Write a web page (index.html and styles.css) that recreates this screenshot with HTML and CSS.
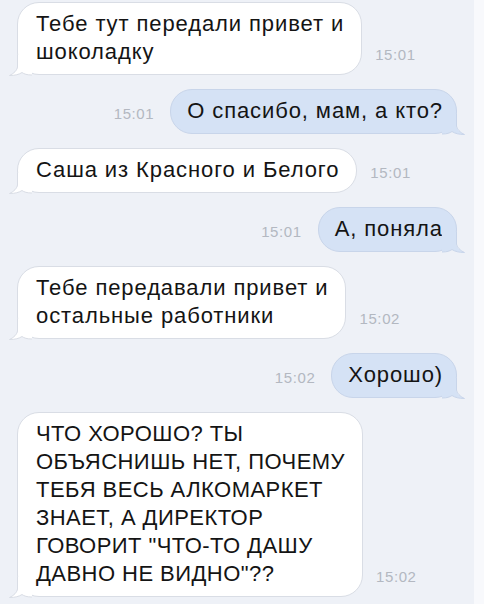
FILE: index.html
```html
<!DOCTYPE html>
<html>

<head>
  <title>Чат</title>
  <link rel="stylesheet" href="styles.css">
</head>

<body>
  <div class="screen">
    <div class="chat">
      <div class="row in">
        <div class="bubble">Тебе тут передали привет и<br>шоколадку
          <svg class="tail" width="24" height="21" viewBox="0 0 24 21"><path class="tail-fill" d="M10,0 L10,12 C9.5,15 6.5,18.5 1.5,20.5 C7,20.5 11,19.5 14,17.5 C16,19 19,20 24,20 L24,0 Z"/><path class="tail-line" d="M9.5,0 L9.5,12 C9,15 6,18.5 1.5,20.5 C7,20.5 11,19.5 14,17.5 C16,19 19,20 24,20"/></svg>
        </div>
        <span class="time">15:01</span>
      </div>

      <div class="row out">
        <span class="time">15:01</span>
        <div class="bubble">О спасибо, мам, а кто?
          <svg class="tail" width="24" height="21" viewBox="0 0 24 21"><path class="tail-fill" d="M10,0 L10,12 C9.5,15 6.5,18.5 1.5,20.5 C7,20.5 11,19.5 14,17.5 C16,19 19,20 24,20 L24,0 Z"/><path class="tail-line" d="M9.5,0 L9.5,12 C9,15 6,18.5 1.5,20.5 C7,20.5 11,19.5 14,17.5 C16,19 19,20 24,20"/></svg>
        </div>
      </div>

      <div class="row in">
        <div class="bubble">Саша из Красного и Белого
          <svg class="tail" width="24" height="21" viewBox="0 0 24 21"><path class="tail-fill" d="M10,0 L10,12 C9.5,15 6.5,18.5 1.5,20.5 C7,20.5 11,19.5 14,17.5 C16,19 19,20 24,20 L24,0 Z"/><path class="tail-line" d="M9.5,0 L9.5,12 C9,15 6,18.5 1.5,20.5 C7,20.5 11,19.5 14,17.5 C16,19 19,20 24,20"/></svg>
        </div>
        <span class="time">15:01</span>
      </div>

      <div class="row out">
        <span class="time">15:01</span>
        <div class="bubble">А, поняла
          <svg class="tail" width="24" height="21" viewBox="0 0 24 21"><path class="tail-fill" d="M10,0 L10,12 C9.5,15 6.5,18.5 1.5,20.5 C7,20.5 11,19.5 14,17.5 C16,19 19,20 24,20 L24,0 Z"/><path class="tail-line" d="M9.5,0 L9.5,12 C9,15 6,18.5 1.5,20.5 C7,20.5 11,19.5 14,17.5 C16,19 19,20 24,20"/></svg>
        </div>
      </div>

      <div class="row in">
        <div class="bubble">Тебе передавали привет и<br>остальные работники
          <svg class="tail" width="24" height="21" viewBox="0 0 24 21"><path class="tail-fill" d="M10,0 L10,12 C9.5,15 6.5,18.5 1.5,20.5 C7,20.5 11,19.5 14,17.5 C16,19 19,20 24,20 L24,0 Z"/><path class="tail-line" d="M9.5,0 L9.5,12 C9,15 6,18.5 1.5,20.5 C7,20.5 11,19.5 14,17.5 C16,19 19,20 24,20"/></svg>
        </div>
        <span class="time">15:02</span>
      </div>

      <div class="row out">
        <span class="time">15:02</span>
        <div class="bubble">Хорошо)
          <svg class="tail" width="24" height="21" viewBox="0 0 24 21"><path class="tail-fill" d="M10,0 L10,12 C9.5,15 6.5,18.5 1.5,20.5 C7,20.5 11,19.5 14,17.5 C16,19 19,20 24,20 L24,0 Z"/><path class="tail-line" d="M9.5,0 L9.5,12 C9,15 6,18.5 1.5,20.5 C7,20.5 11,19.5 14,17.5 C16,19 19,20 24,20"/></svg>
        </div>
      </div>

      <div class="row in">
        <div class="bubble caps">ЧТО ХОРОШО? ТЫ<br>ОБЪЯСНИШЬ НЕТ, ПОЧЕМУ<br>ТЕБЯ ВЕСЬ АЛКОМАРКЕТ<br>ЗНАЕТ, А ДИРЕКТОР<br>ГОВОРИТ "ЧТО-ТО ДАШУ<br>ДАВНО НЕ ВИДНО"??
          <svg class="tail" width="24" height="21" viewBox="0 0 24 21"><path class="tail-fill" d="M10,0 L10,12 C9.5,15 6.5,18.5 1.5,20.5 C7,20.5 11,19.5 14,17.5 C16,19 19,20 24,20 L24,0 Z"/><path class="tail-line" d="M9.5,0 L9.5,12 C9,15 6,18.5 1.5,20.5 C7,20.5 11,19.5 14,17.5 C16,19 19,20 24,20"/></svg>
        </div>
        <span class="time">15:02</span>
      </div>
    </div>
    <div class="edge"></div>
  </div>
</body>

</html>
```

FILE: styles.css
```css
body {
  margin: 0;
  font-family: "Liberation Sans", Arial, sans-serif;
  background-color: #eef1f7;
}

.screen {
  display: flex;
  height: 604px;
  overflow: hidden;
}

.chat {
  flex: 1;
  display: flex;
  flex-direction: column;
  gap: 14px;
  padding: 2px 17px 0;
  background-color: #eef1f7;
}

.edge {
  width: 10px;
  background-color: #f8f9fc;
}

.row {
  display: flex;
  align-items: flex-end;
}

.row.out {
  justify-content: flex-end;
}

.bubble {
  position: relative;
  padding: 7px 17px 8px 18px;
  font-size: 22px;
  letter-spacing: 0.9px;
  line-height: 28px;
  color: #141414;
  border-radius: 22px;
  white-space: nowrap;
}

.bubble.caps {
  letter-spacing: 0.45px;
}

.in .bubble {
  background-color: #ffffff;
  border: 1px solid #d9dde5;
}

.out .bubble {
  padding: 7px 13px 8px 16px;
  background-color: #d5e2f5;
  border: 1px solid #c8d5ea;
}

.time {
  font-size: 15px;
  letter-spacing: 0.6px;
  line-height: 16px;
  color: #b3b8c1;
  margin-bottom: 12px;
}

.in .time {
  margin-left: 13px;
}

.out .time {
  margin-right: 16px;
}

.tail {
  position: absolute;
  bottom: -2px;
  left: -10px;
}

.out .tail {
  left: auto;
  right: -10px;
  transform: scaleX(-1);
}

.tail-line {
  fill: none;
  stroke-width: 1;
}

.in .tail-fill {
  fill: #ffffff;
}

.in .tail-line {
  stroke: #d9dde5;
}

.out .tail-fill {
  fill: #d5e2f5;
}

.out .tail-line {
  stroke: #c8d5ea;
}
```
